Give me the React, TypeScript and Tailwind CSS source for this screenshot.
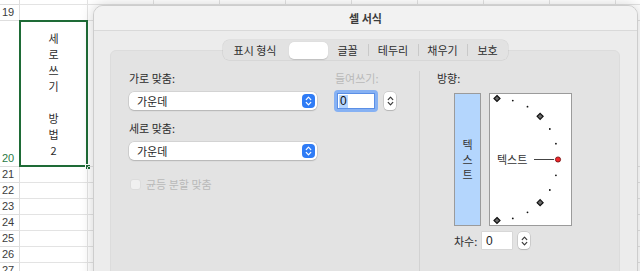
import React from 'react';

const KR = "font-['Noto_Sans_CJK_KR','Noto_Sans',sans-serif]";

// spreadsheet geometry
const COL_WIDTHS = [68, 66, 66, 66, 66, 66, 66, 66, 66, 66];
const ROWS = [
    { n: 18, h: 16 },
    { n: 19, h: 16 },
    { n: 20, h: 146 },
    { n: 21, h: 16 },
    { n: 22, h: 16 },
    { n: 23, h: 16 },
    { n: 24, h: 16 },
    { n: 25, h: 16 },
    { n: 26, h: 16 },
    { n: 27, h: 16 },
];

const CELL_LINES = ['세', '로', '쓰', '기', '', '방', '법', '2'];

function Sheet() {
    return (
        <div className="flex flex-col -mt-[11px]">
            {ROWS.map((r) => (
                <div key={r.n} className="flex" style={{ height: r.h }}>
                    <div
                        className={`w-[20px] shrink-0 border-r border-b border-[#dedede] flex items-end pl-[2px] pb-[1px] text-[11px] leading-[14px] font-['Liberation_Sans',sans-serif] ${
                            r.n === 20 ? 'text-[#2a7a45]' : 'text-[#3c3c3c]'
                        }`}
                    >
                        {r.n}
                    </div>
                    {COL_WIDTHS.map((w, i) => (
                        <div
                            key={i}
                            className="shrink-0 border-r border-b border-[#e3e3e3] relative"
                            style={{ width: w }}
                        >
                            {r.n === 20 && i === 0 && (
                                <>
                                    <div className={`h-full flex flex-col items-center justify-center text-[11px] leading-[16px] text-[#2b2b2b] ${KR}`}>
                                        {CELL_LINES.map((c, k) => (
                                            <span key={k} className="h-[16px]">{c}</span>
                                        ))}
                                    </div>
                                    <div className="absolute -left-[1px] -top-[1px] -right-[1px] -bottom-[1px] border-2 border-[#1e6b36]" />
                                    <div className="absolute -right-[4px] -bottom-[4px] w-[6px] h-[6px] bg-[#1e6b36] border border-white" />
                                </>
                            )}
                        </div>
                    ))}
                </div>
            ))}
        </div>
    );
}

function Chevrons({ color }: { color: string }) {
    return (
        <svg width="7" height="12" viewBox="0 0 7 12">
            <path
                d="M1.2 4.6 L3.5 2.2 L5.8 4.6 M1.2 7.4 L3.5 9.8 L5.8 7.4"
                fill="none"
                stroke={color}
                strokeWidth="1.2"
                strokeLinecap="round"
                strokeLinejoin="round"
            />
        </svg>
    );
}

function Stepper({ h = 18 }: { h?: number }) {
    return (
        <div
            className="w-[12px] rounded-[4px] bg-white flex items-center justify-center shadow-[0_0_0_0.5px_rgba(0,0,0,0.18),0_1px_1px_rgba(0,0,0,0.12)]"
            style={{ height: h }}
        >
            <Chevrons color="#3a3a3a" />
        </div>
    );
}

function Select({ value }: { value: string }) {
    return (
        <div className="w-[188px] h-[18px] rounded-[5px] bg-white flex items-center justify-between pl-[8px] pr-[2px] shadow-[0_0_0_0.5px_rgba(0,0,0,0.14),0_1px_1.5px_rgba(0,0,0,0.14)]">
            <span className="text-[11px] leading-[14px] text-[#262626]">{value}</span>
            <div className="w-[13px] h-[14px] rounded-[4px] bg-[#2f7cf6] flex items-center justify-center">
                <Chevrons color="#ffffff" />
            </div>
        </div>
    );
}

function Tabs() {
    const Sep = () => <div className="w-px h-[12px] bg-[#c9c9c9]" />;
    return (
        <div className="relative z-10 flex justify-center">
            <div className="h-[20px] flex items-center rounded-[6px] bg-[#e2e2e2] shadow-[0_0_0_0.5px_rgba(0,0,0,0.1)] text-[11px] leading-[14px] text-[#2e2e2e]">
                <div className="w-[65px] text-center">표시 형식</div>
                <div className="w-[39px] h-[17px] ml-px rounded-[5px] bg-white shadow-[0_0.5px_1px_rgba(0,0,0,0.15)]" />
                <div className="w-[40px] text-center">글꼴</div>
                <Sep />
                <div className="w-[49px] text-center">테두리</div>
                <Sep />
                <div className="w-[48px] text-center">채우기</div>
                <Sep />
                <div className="w-[40px] text-center">보호</div>
            </div>
        </div>
    );
}

function Orientation() {
    const cx = 7;
    const cy = 65.5;
    const r = 61;
    const marks = [-90, -75, -60, -45, -30, -15, 15, 30, 45, 60, 75, 90];
    return (
        <div className="relative w-[83px] h-[133px] bg-white border border-[#9b9b9b]">
            <svg width="81" height="131" viewBox="0 0 81 131" className="absolute left-0 top-0">
                {marks.map((a) => {
                    const x = cx + r * Math.cos((a * Math.PI) / 180);
                    const y = cy + r * Math.sin((a * Math.PI) / 180);
                    return Math.abs(a) % 45 === 0 ? (
                        <polygon
                            key={a}
                            points={`${x},${y - 3} ${x + 3},${y} ${x},${y + 3} ${x - 3},${y}`}
                            fill="#6a6a6a"
                            stroke="#111"
                            strokeWidth="1.2"
                        />
                    ) : (
                        <circle key={a} cx={x} cy={y} r="0.9" fill="#111" />
                    );
                })}
                <line x1="44" y1={cy} x2="64" y2={cy} stroke="#444" strokeWidth="1" />
                <circle cx={cx + r} cy={cy} r="2.6" fill="#f0262a" stroke="#6a1010" strokeWidth="0.8" />
            </svg>
            <span className="absolute left-[7px] top-[57px] text-[11px] leading-[16px] text-[#333]">텍스트</span>
        </div>
    );
}

export default function App() {
    return (
        <div className={`relative w-[640px] h-[271px] overflow-hidden bg-white ${KR}`}>
            <Sheet />

            {/* Format Cells dialog */}
            <div className="absolute left-[93px] top-[5px] w-[545px] h-[290px] rounded-t-[10px] bg-[#ececec] border border-[#cdcdcd] shadow-[0_0_14px_rgba(0,0,0,0.18)] overflow-hidden">
                <div className="h-[25px] bg-[#f2f2f2] border-b border-[#d9d9d9] flex items-center justify-center">
                    <span className="text-[11px] leading-[14px] font-semibold text-[#3b3b3b]">셀 서식</span>
                </div>

                <div className="pt-[9px] pl-[16px] pr-[17px]">
                    <Tabs />

                    <div className="-mt-[10px] h-[240px] rounded-[6px] bg-[#e3e3e3] border border-[#dcdcdc] flex">
                        {/* left: text alignment */}
                        <div className="w-[308px] pl-[18px] pt-[19px] flex gap-[17px]">
                            <div className="flex flex-col">
                                <span className="h-[16px] text-[11px] leading-[16px] text-[#2c2c2c]">가로 맞춤:</span>
                                <div className="mt-[6px]">
                                    <Select value="가운데" />
                                </div>
                                <span className="mt-[10px] h-[16px] text-[11px] leading-[16px] text-[#2c2c2c]">세로 맞춤:</span>
                                <div className="mt-[6px]">
                                    <Select value="가운데" />
                                </div>
                                <div className="mt-[16px] h-[16px] flex items-center gap-[5px] pl-px">
                                    <div className="w-[11px] h-[11px] rounded-[3px] bg-[#f0f0f0] border border-[#dcdcdc]" />
                                    <span className="text-[11px] leading-[14px] text-[#b9b9b9]">균등 분할 맞춤</span>
                                </div>
                            </div>

                            <div className="flex flex-col">
                                <span className="h-[16px] pl-px text-[11px] leading-[16px] text-[#b9b9b9]">들여쓰기:</span>
                                <div className="mt-[4px] flex items-center gap-[6px]">
                                    <div className="w-[44px] h-[22px] rounded-[4px] bg-[#86b1f3] p-[3px]">
                                        <div className="w-full h-full bg-white border border-[#5b8fe6] flex items-center pl-[1px]">
                                            <span className="bg-[#b5d5fe] text-[12px] leading-[13px] px-[1px] font-['Liberation_Sans',sans-serif] text-[#111]">0</span>
                                        </div>
                                    </div>
                                    <Stepper />
                                </div>
                            </div>
                        </div>

                        <div className="w-px mt-[20px] bg-[#d2d2d2]" />

                        {/* right: orientation */}
                        <div className="flex-1 pl-[17px] pt-[19px] flex flex-col">
                            <span className="h-[16px] text-[11px] leading-[16px] text-[#2c2c2c]">방향:</span>
                            <div className="mt-[7px] ml-[17px] flex gap-[8px]">
                                <div className="w-[27px] h-[133px] bg-[#b4d6fd] border border-[#9b9b9b] flex flex-col items-center justify-center text-[11px] leading-[15px] text-[#333]">
                                    <span>텍</span>
                                    <span>스</span>
                                    <span>트</span>
                                </div>
                                <Orientation />
                            </div>
                            <div className="mt-[6px] ml-[17px] flex items-center">
                                <span className="w-[28px] text-[11px] leading-[14px] text-[#2c2c2c]">차수:</span>
                                <div className="w-[30px] h-[17px] bg-white flex items-center pl-[4px] shadow-[0_0_0_0.5px_rgba(0,0,0,0.1)] text-[12px] leading-[14px] font-['Liberation_Sans',sans-serif] text-[#222]">
                                    0
                                </div>
                                <div className="ml-[6px]">
                                    <Stepper h={17} />
                                </div>
                            </div>
                        </div>
                    </div>
                </div>
            </div>
        </div>
    );
}
